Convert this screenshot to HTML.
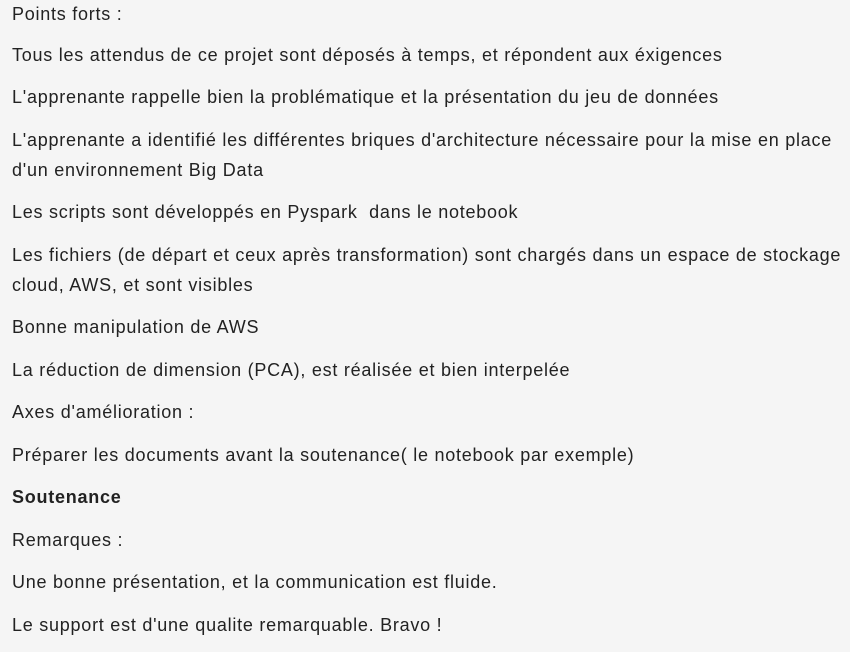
<!DOCTYPE html>
<html><head><meta charset="utf-8"><style>
html,body{margin:0;padding:0;background:#f5f5f5;}
body{width:850px;height:652px;overflow:hidden;font-family:"Liberation Sans",sans-serif;font-size:18px;color:#222;}
.w{position:absolute;left:12px;top:0;width:840px;}
p{margin:0 0 12.5px 0;line-height:30px;white-space:nowrap;letter-spacing:0.75px;}
.f{margin-top:-1px;margin-bottom:10.5px;}
b{font-weight:bold;}
</style></head><body><div class="w">
<p class="f">Points forts :</p>
<p>Tous les attendus de ce projet sont déposés à temps, et répondent aux éxigences</p>
<p>L'apprenante rappelle bien la problématique et la présentation du jeu de données</p>
<p>L'apprenante a identifié les différentes briques d'architecture nécessaire pour la mise en place<br>d'un environnement Big Data</p>
<p>Les scripts sont développés en Pyspark&nbsp; dans le notebook</p>
<p>Les fichiers (de départ et ceux après transformation) sont chargés dans un espace de stockage<br>cloud, AWS, et sont visibles</p>
<p>Bonne manipulation de AWS</p>
<p>La réduction de dimension (PCA), est réalisée et bien interpelée</p>
<p>Axes d'amélioration :</p>
<p>Préparer les documents avant la soutenance( le notebook par exemple)</p>
<p><b>Soutenance</b></p>
<p>Remarques :</p>
<p>Une bonne présentation, et la communication est fluide.</p>
<p>Le support est d'une qualite remarquable. Bravo !</p>
</div></body></html>
